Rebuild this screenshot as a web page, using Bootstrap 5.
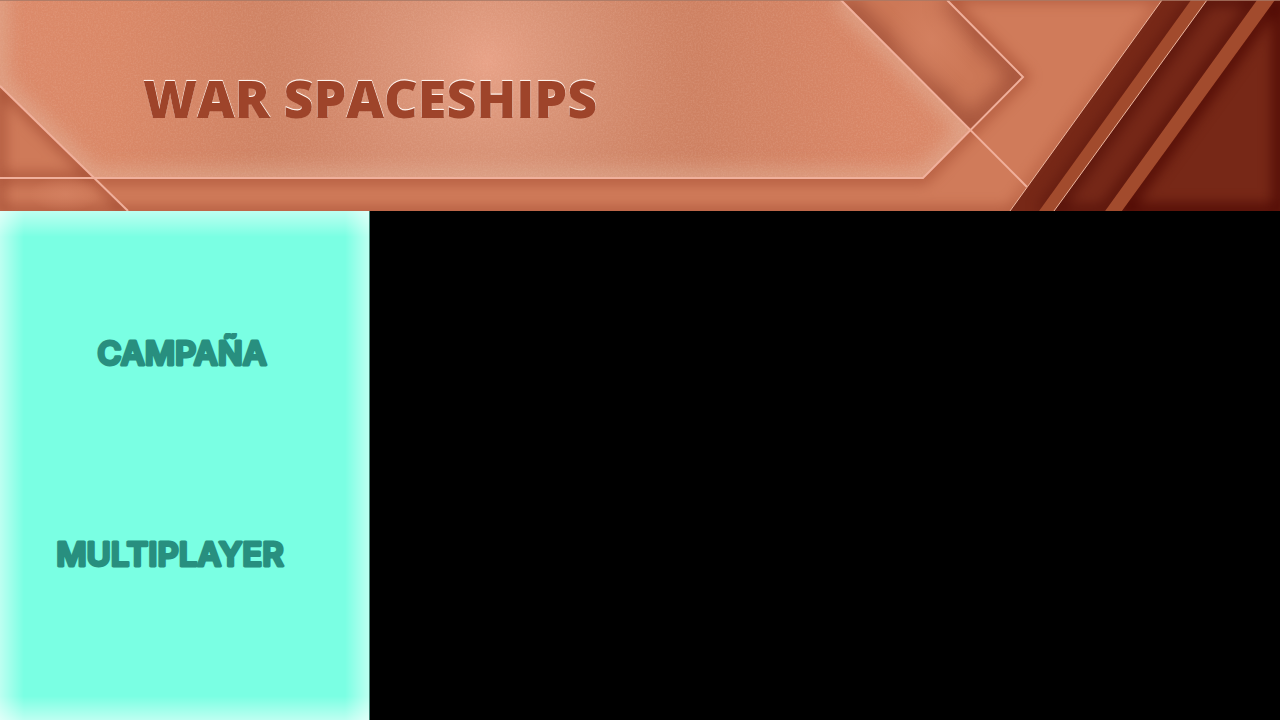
<!DOCTYPE html>
<html lang="es">
<head>
<meta charset="utf-8">
<meta name="viewport" content="width=device-width, initial-scale=1">
<title>War Spaceships</title>
<link href="https://cdn.jsdelivr.net/npm/bootstrap@5.3.0/dist/css/bootstrap.min.css" rel="stylesheet">
<style>
  body { background: #000; font-family: Inter, sans-serif; }
  .banner { background: #cf7b5a; padding: 68px 0 83px 143px; }
  .banner-art { z-index: 0; }
  .game-title {
    position: relative;
    font: 800 52px/60px "Open Sans", sans-serif;
    color: #9e442a;
    text-shadow: 0 -1px 0 #fff6f0, 0 -1px 1px #fff1ea;
  }
  .side {
    width: 370px;
    max-width: 100%;
    padding: 0 30px 24px 0;
    border-right: 1px solid #3f7f72;
    background:
      linear-gradient(to right, #ffffff80, #fff0 24px),
      linear-gradient(to left, #ffffff80, #fff0 24px),
      linear-gradient(to bottom, #ffffff80, #fff0 26px),
      linear-gradient(to top, #ffffff80, #fff0 24px),
      #7affe3;
  }
  .menu { gap: 161px; }
  .menu-btn { height: 40px; color: #288f7f; }
  .menu-btn text {
    font: 600 33px Inter, sans-serif;
    fill: currentColor;
    stroke: currentColor;
    stroke-width: 3px;
    stroke-linejoin: round;
    text-anchor: middle;
  }
</style>
</head>
<body class="min-vh-100 d-flex flex-column">
<header class="banner position-relative overflow-hidden">
  <svg class="banner-art position-absolute top-0 start-0 w-100 h-100" viewBox="0 0 1280 211" preserveAspectRatio="xMidYMid slice" aria-hidden="true">
    <defs>
      <linearGradient id="panelFill" x1="0" x2="970" y1="0" y2="0" gradientUnits="userSpaceOnUse">
        <stop offset="0" stop-color="#dc8a6a"/><stop offset=".12" stop-color="#da8867"/>
        <stop offset=".28" stop-color="#cf8364"/><stop offset=".4" stop-color="#d48b6e"/>
        <stop offset=".58" stop-color="#d1896b"/><stop offset=".72" stop-color="#ce8162"/>
        <stop offset=".9" stop-color="#d98666"/><stop offset="1" stop-color="#db8969"/>
      </linearGradient>
      <radialGradient id="spot" cx="487" cy="62" r="190" gradientUnits="userSpaceOnUse">
        <stop offset="0" stop-color="#e8a287"/><stop offset=".45" stop-color="#dc987c" stop-opacity=".6"/><stop offset="1" stop-color="#d48b6e" stop-opacity="0"/>
      </radialGradient>
      <radialGradient id="glow"><stop offset="0" stop-color="#d68363"/><stop offset="1" stop-color="#d68363" stop-opacity="0"/></radialGradient>
      <filter id="soft" filterUnits="userSpaceOnUse" x="-60" y="-60" width="1400" height="340" color-interpolation-filters="sRGB"><feGaussianBlur stdDeviation="10"/></filter>
      <filter id="softSmall" filterUnits="userSpaceOnUse" x="-60" y="-60" width="1400" height="340" color-interpolation-filters="sRGB"><feGaussianBlur stdDeviation="7"/></filter>
      <filter id="grain" x="0" y="0" width="100%" height="100%">
        <feTurbulence type="fractalNoise" baseFrequency=".6" numOctaves="2" seed="4"/>
        <feColorMatrix values="0 0 0 0 .95  0 0 0 0 .66  0 0 0 0 .55  1.2 0 0 0 -.45"/>
      </filter>
      <clipPath id="panelClip"><path d="M-2 -2H839L970 130L923 178H94L-2 84Z"/></clipPath>
      <clipPath id="chevClip"><path d="M841 0H947L1023 77L970 130Z"/></clipPath>
      <clipPath id="cornerClip"><path d="M0 86L94 178L128 211H0Z"/></clipPath>
      <clipPath id="barA"><path d="M1162 0H1191L1039 211H1010Z"/></clipPath>
      <clipPath id="barB"><path d="M1207 0H1257L1105 211H1054Z"/></clipPath>
      <clipPath id="barC"><path d="M1275 0H1280V211H1122Z"/></clipPath>
    </defs>

    <rect width="1280" height="211" fill="#d07b5a"/>
    <!-- shadows cast by the panel and the chevron -->
    <g fill="none" stroke="#a2492f" stroke-width="11" filter="url(#softSmall)" opacity=".7">
      <path d="M947 0L1023 77L923 178H94"/>
      <path d="M1162 0L1010 211" stroke-width="6"/>
      <path d="M0 213H1280M940 -4H1170"/>
    </g>
    <g clip-path="url(#chevClip)">
      <path d="M841 0H947L1023 77L970 130Z" fill="#cd7857"/>
      <path d="M841 0L970 130L1023 77L947 0" fill="none" stroke="#984832" stroke-width="20" filter="url(#soft)" opacity=".8"/>
      <ellipse cx="931" cy="40" rx="44" ry="56" fill="url(#glow)" opacity=".7"/>
    </g>
    <g clip-path="url(#cornerClip)">
      <path d="M0 86L128 211H0Z" fill="#cf7a59"/>
      <path d="M0 86L128 211H0ZM0 178H94" fill="none" stroke="#9c452d" stroke-width="7" filter="url(#softSmall)"/>
      <ellipse cx="65" cy="194" rx="36" ry="18" fill="url(#glow)" opacity=".7"/>
    </g>

    <!-- main panel -->
    <g clip-path="url(#panelClip)">
      <rect width="970" height="180" fill="url(#panelFill)"/>
      <rect width="970" height="180" fill="url(#spot)"/>
      <rect width="970" height="180" filter="url(#grain)" opacity=".25"/>
      <path d="M839 -2L970 130L923 178H94L-2 84V-20" fill="none" stroke="#e4b69e" stroke-width="14" filter="url(#soft)" opacity=".75"/>
    </g>
    <g fill="none" stroke="#f0b09c" stroke-width="2">
      <path d="M0 86L128 211"/><path d="M0 178H923L1023 77L947 0"/><path d="M841 0L1027 187"/>
    </g>

    <!-- diagonal bars -->
    <path d="M1162 0H1280V211H1010Z" fill="#a24b2d"/>
    <g clip-path="url(#barA)"><rect x="1000" width="200" height="211" fill="#772817"/><path d="M1193 0L1041 211" stroke="#54110a" stroke-width="6" filter="url(#softSmall)"/></g>
    <g clip-path="url(#barB)"><rect x="1040" width="230" height="211" fill="#762818"/><path d="M1207 0H1257L1105 211H1054Z" fill="none" stroke="#500d06" stroke-width="9" filter="url(#softSmall)"/></g>
    <g clip-path="url(#barC)"><rect x="1110" width="180" height="211" fill="#772817"/><path d="M1275 0L1122 211H1280V0Z" fill="none" stroke="#500a04" stroke-width="13" filter="url(#softSmall)"/></g>
    <path d="M1162 0L1010 211M1207 0L1054 211" stroke="#edb7a0" fill="none"/>
    <path d="M0 .5H1280" stroke="#a87966" opacity=".8"/>
  </svg>
  <h1 class="game-title m-0">WAR SPACESHIPS</h1>
</header>
<main class="d-flex flex-grow-1">
  <nav class="side d-flex flex-column justify-content-center" aria-label="Menú">
    <div class="menu d-flex flex-column align-items-stretch">
      <button type="button" class="menu-btn btn border-0 p-0 ps-4"><svg width="240" height="40" viewBox="0 0 240 40"><text x="120" y="32">CAMPAÑA</text></svg></button>
      <button type="button" class="menu-btn btn border-0 p-0"><svg width="240" height="40" viewBox="0 0 240 40"><text x="120" y="32">MULTIPLAYER</text></svg></button>
    </div>
  </nav>
  <section class="flex-grow-1" aria-label="Juego"></section>
</main>
<script src="https://cdn.jsdelivr.net/npm/bootstrap@5.3.0/dist/js/bootstrap.bundle.min.js"></script>
</body>
</html>
